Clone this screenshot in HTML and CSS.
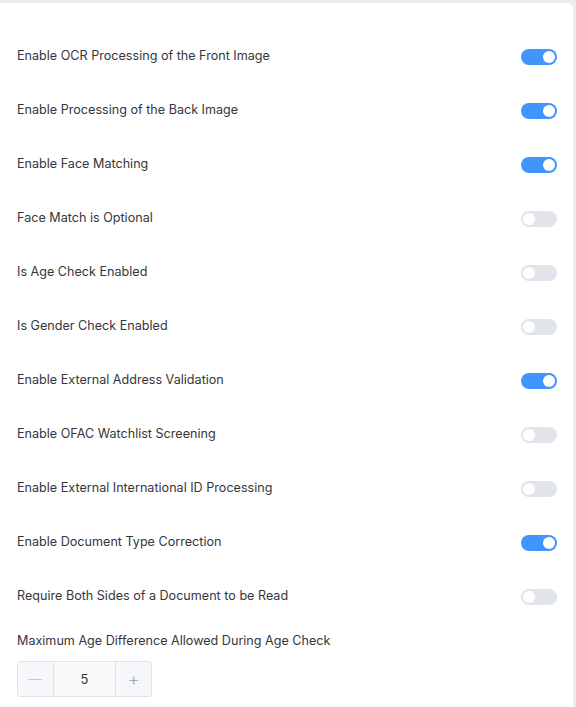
FILE: index.html
```html
<!DOCTYPE html>
<html>
<head>
<meta charset="utf-8">
<link rel="stylesheet" href="styles.css">
</head>
<body>
<div class="card">
  <div class="row"><span class="label">Enable OCR Processing of the Front Image</span><span class="switch on"></span></div>
  <div class="row"><span class="label">Enable Processing of the Back Image</span><span class="switch on"></span></div>
  <div class="row"><span class="label">Enable Face Matching</span><span class="switch on"></span></div>
  <div class="row"><span class="label">Face Match is Optional</span><span class="switch"></span></div>
  <div class="row"><span class="label">Is Age Check Enabled</span><span class="switch"></span></div>
  <div class="row"><span class="label">Is Gender Check Enabled</span><span class="switch"></span></div>
  <div class="row"><span class="label">Enable External Address Validation</span><span class="switch on"></span></div>
  <div class="row"><span class="label">Enable OFAC Watchlist Screening</span><span class="switch"></span></div>
  <div class="row"><span class="label">Enable External International ID Processing</span><span class="switch"></span></div>
  <div class="row"><span class="label">Enable Document Type Correction</span><span class="switch on"></span></div>
  <div class="row"><span class="label">Require Both Sides of a Document to be Read</span><span class="switch"></span></div>
  <div class="field">
    <div class="label">Maximum Age Difference Allowed During Age Check</div>
    <div class="stepper">
      <span class="btn minus">&#8212;</span>
      <span class="value">5</span>
      <span class="btn plus">+</span>
    </div>
  </div>
</div>
</body>
</html>
```
FILE: styles.css
```css
html, body {
  margin: 0;
  padding: 0;
  background: #ececec;
}
body {
  font-family: Inter, "Noto Sans", sans-serif;
  font-size: 12.6px;
  color: #35373b;
  height: 707px;
  overflow: hidden;
}
.card {
  margin: 3px 3px 0 0;
  background: #fff;
  border-top-right-radius: 6px;
  padding: 27px 16px 20px 17px;
  height: 720px;
  box-sizing: border-box;
}
.row {
  height: 54px;
  display: flex;
  align-items: center;
  justify-content: space-between;
}
.label {
  line-height: 18px;
  padding-bottom: 3px;
}
.switch {
  width: 36px;
  height: 16px;
  border-radius: 8px;
  background: #e1e4eb;
  position: relative;
  flex: none;
}
.switch::after {
  content: "";
  position: absolute;
  left: 2px;
  top: 2px;
  width: 12px;
  height: 12px;
  border-radius: 50%;
  background: #fff;
}
.switch.on {
  background: #4096ff;
}
.switch.on::after {
  left: 22px;
}
.field {
  padding-top: 7px;
}
.field .label {
  line-height: 20px;
  padding-bottom: 0;
}
.stepper {
  margin-top: 10px;
  display: flex;
  width: 135px;
  height: 36px;
  border: 1px solid #e1e3e8;
  border-radius: 3px;
  box-sizing: border-box;
  overflow: hidden;
}
.btn {
  width: 35px;
  background: #f5f7fa;
  display: flex;
  align-items: center;
  justify-content: center;
}
.minus {
  color: #c4c7cc;
  font-size: 13px;
}
.plus {
  color: #a3a6ad;
  font-size: 18px;
  font-weight: 300;
}
.value {
  width: 62px;
  background: #fafafa;
  border-left: 1px solid #e1e3e8;
  border-right: 1px solid #e1e3e8;
  display: flex;
  align-items: center;
  justify-content: center;
  font-size: 13px;
  color: #35373b;
}
```
